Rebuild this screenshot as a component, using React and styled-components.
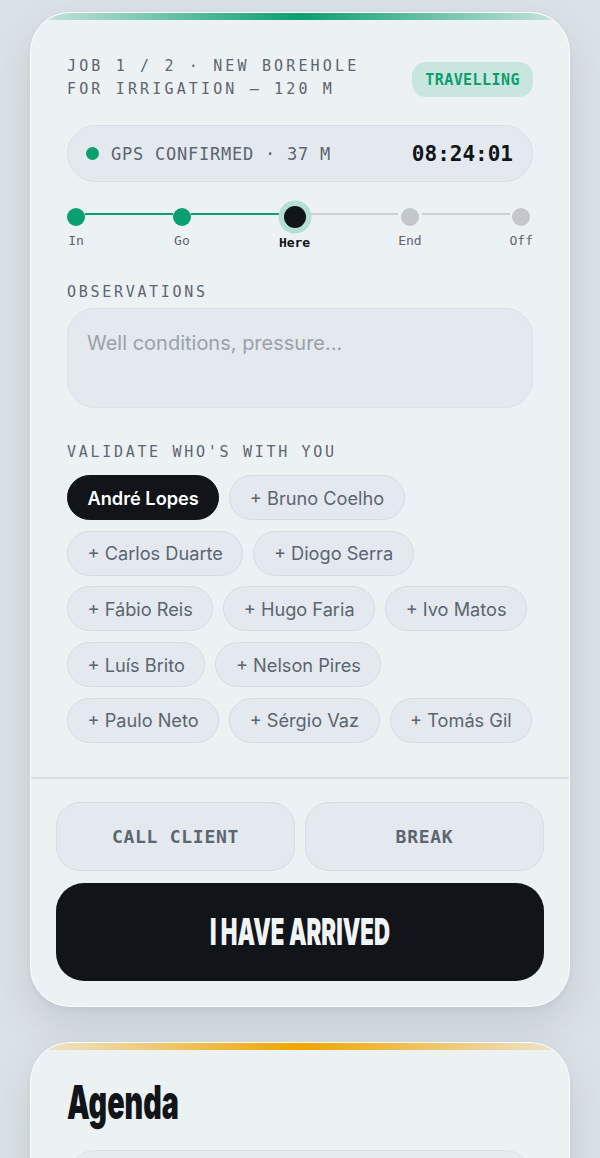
import styled, { createGlobalStyle } from 'styled-components';

// ── 전역 스타일 ──

const GlobalStyle = createGlobalStyle`
  html, body {
    margin: 0;
    padding: 0;
    background: #dbe2e7;
  }
  body {
    font-family: Inter, "Noto Sans", sans-serif;
    color: #111418;
  }
`;

const MONO = `"DejaVu Sans Mono", "Liberation Mono", monospace`;

// ── 레이아웃 ──

const Page = styled.div`
  padding: 12px 30px 40px;
  display: flex;
  flex-direction: column;
  gap: 35px;
`;

/** 카드 — 상단 컬러 스트라이프 포함 */
const Card = styled.section`
  position: relative;
  overflow: hidden;
  background: #ecf1f4;
  border: 1px solid rgba(255, 255, 255, 0.8);
  border-radius: 40px;
  box-shadow: 0 18px 40px rgba(40, 55, 70, 0.13), 0 2px 6px rgba(40, 55, 70, 0.05);

  &::before {
    content: '';
    position: absolute;
    top: 0;
    left: 0;
    right: 0;
    height: 7px;
    background: linear-gradient(
      90deg,
      ${({ $accent }) => $accent}22,
      ${({ $accent }) => $accent} 50%,
      ${({ $accent }) => $accent}22
    );
  }
`;

const CardBody = styled.div`
  padding: 42px 36px 34px;
  display: flex;
  flex-direction: column;
`;

// ── 헤더 ──

const HeaderRow = styled.div`
  display: flex;
  align-items: center;
  justify-content: space-between;
  gap: 16px;
`;

const JobTitle = styled.div`
  font-family: ${MONO};
  font-size: 15px;
  line-height: 23px;
  letter-spacing: 0.21em;
  color: #5c6570;
  text-transform: uppercase;
`;

const StatusBadge = styled.span`
  font-family: ${MONO};
  font-size: 15px;
  font-weight: 700;
  letter-spacing: 0.03em;
  color: #0a9f6e;
  background: #c8e6dd;
  border-radius: 14px;
  height: 35px;
  padding: 0 13px;
  display: inline-flex;
  align-items: center;
  margin-top: 3px;
`;

// ── GPS ──

const GpsBar = styled.div`
  margin-top: 24px;
  height: 57px;
  box-sizing: border-box;
  border-radius: 29px;
  background: #e3e9ee;
  border: 1px solid #d9dfe4;
  display: flex;
  align-items: center;
  padding: 0 19px 0 18px;
  gap: 12px;
`;

const GpsDot = styled.span`
  width: 13px;
  height: 13px;
  border-radius: 50%;
  background: #0a9f6e;
  flex: none;
`;

const GpsText = styled.span`
  flex: 1;
  font-family: ${MONO};
  font-size: 17px;
  letter-spacing: 0.045em;
  color: #5c6570;
`;

const GpsTime = styled.span`
  font-family: ${MONO};
  font-size: 21px;
  font-weight: 700;
  color: #111418;
`;

// ── 진행 단계 ──

const Stepper = styled.div`
  margin-top: 24px;
  display: flex;
  align-items: flex-start;
`;

const Step = styled.div`
  display: flex;
  flex-direction: column;
  align-items: center;
  flex: none;
`;

const DotWrap = styled.div`
  height: 22px;
  display: flex;
  align-items: center;
  justify-content: center;
`;

const StepDot = styled.span`
  width: ${({ $state }) => ($state === 'current' ? 22 : 18)}px;
  height: ${({ $state }) => ($state === 'current' ? 22 : 18)}px;
  border-radius: 50%;
  background: ${({ $state }) =>
    $state === 'done' ? '#0a9f6e' : $state === 'current' ? '#111418' : '#c3c7cb'};
  box-shadow: ${({ $state }) => ($state === 'current' ? '0 0 0 5.5px #b4e0d3' : 'none')};
`;

const StepLabel = styled.span`
  margin-top: ${({ $active }) => ($active ? 7 : 5)}px;
  font-family: ${MONO};
  font-size: 13px;
  line-height: 16px;
  font-weight: ${({ $active }) => ($active ? 700 : 400)};
  color: ${({ $active }) => ($active ? '#111418' : '#5c6570')};
`;

const Connector = styled.span`
  flex: 1;
  height: 2px;
  margin-top: 7px;
  background: ${({ $done }) => ($done ? '#0a9f6e' : '#cbd0d4')};
`;

// ── 관찰 / 동행자 ──

const FieldLabel = styled.div`
  margin-top: ${({ $gap }) => $gap}px;
  font-family: ${MONO};
  font-size: 15px;
  line-height: 18px;
  letter-spacing: 0.18em;
  color: #5c6570;
  text-transform: uppercase;
`;

const NotesBox = styled.textarea`
  margin-top: 7px;
  height: 100px;
  box-sizing: border-box;
  resize: none;
  border-radius: 28px;
  background: #e3e9ee;
  border: 1px solid #dbe1e6;
  padding: 20px 19px;
  font-family: Inter, sans-serif;
  font-size: 20px;
  line-height: 28px;
  color: #111418;
  outline: none;

  &::placeholder {
    color: #9aa1a8;
  }
`;

const ChipList = styled.div`
  margin-top: 14px;
  display: flex;
  flex-wrap: wrap;
  gap: 10.7px 10px;
`;

const Chip = styled.button`
  height: 45px;
  box-sizing: border-box;
  padding: 0 19.5px;
  border-radius: 999px;
  font-family: Inter, sans-serif;
  font-size: 18.2px;
  font-weight: ${({ $selected }) => ($selected ? 600 : 400)};
  color: ${({ $selected }) => ($selected ? '#ffffff' : '#5c6570')};
  background: ${({ $selected }) => ($selected ? '#111418' : '#e3e9ee')};
  border: 1px solid ${({ $selected }) => ($selected ? '#111418' : '#d6dce1')};
  cursor: pointer;
`;

// ── 하단 액션 ──

const Divider = styled.hr`
  margin: 0;
  border: none;
  border-top: 2px solid #d8dee3;
`;

const Actions = styled.div`
  padding: 23px 25px 25px;
  display: flex;
  flex-direction: column;
  gap: 12px;
`;

const ActionRow = styled.div`
  display: grid;
  grid-template-columns: 1fr 1fr;
  gap: 10px;
`;

const GhostButton = styled.button`
  height: 69px;
  border-radius: 24px;
  background: #e3e9ee;
  border: 1px solid #d6dce1;
  font-family: ${MONO};
  font-size: 18px;
  font-weight: 700;
  letter-spacing: 0.04em;
  color: #5c6570;
`;

const PrimaryButton = styled.button`
  height: 98px;
  border-radius: 28px;
  background: #111418;
  border: none;
  display: flex;
  align-items: center;
  justify-content: center;
`;

/** 굵은 압축 서체 효과 — Inter Black 을 가로로 축소 */
const Condensed = styled.span`
  display: inline-block;
  font-family: Inter, sans-serif;
  font-weight: 900;
  font-size: ${({ $size }) => $size}px;
  line-height: 1;
  transform: scaleX(${({ $squeeze }) => $squeeze});
  transform-origin: ${({ $origin }) => $origin || 'center'};
  color: ${({ $color }) => $color};
  white-space: nowrap;
`;

// ── 아젠다 ──

const AgendaBody = styled.div`
  padding: 35px 36px 36px;
  display: flex;
  flex-direction: column;
`;

const AgendaTitle = styled.h2`
  margin: 0;
  height: 48px;
  display: flex;
  align-items: center;
`;

const AgendaItem = styled.div`
  margin-top: 24px;
  height: 90px;
  border-radius: 28px;
  background: #e5ebef;
  border: 1px solid #dbe1e6;
`;

// ── 데이터 ──

const STEPS = [
  { label: 'In', state: 'done' },
  { label: 'Go', state: 'done' },
  { label: 'Here', state: 'current' },
  { label: 'End', state: 'todo' },
  { label: 'Off', state: 'todo' },
];

const CREW = [
  'André Lopes',
  'Bruno Coelho',
  'Carlos Duarte',
  'Diogo Serra',
  'Fábio Reis',
  'Hugo Faria',
  'Ivo Matos',
  'Luís Brito',
  'Nelson Pires',
  'Paulo Neto',
  'Sérgio Vaz',
  'Tomás Gil',
];

export default function App() {
  const selected = ['André Lopes'];

  return (
    <>
      <GlobalStyle />
      <Page>
        <Card $accent="#0a9f6e">
          <CardBody>
            <HeaderRow>
              <JobTitle>
                Job 1 / 2 · New borehole
                <br />
                for irrigation — 120 m
              </JobTitle>
              <StatusBadge>TRAVELLING</StatusBadge>
            </HeaderRow>

            <GpsBar>
              <GpsDot />
              <GpsText>GPS CONFIRMED · 37 M</GpsText>
              <GpsTime>08:24:01</GpsTime>
            </GpsBar>

            <Stepper>
              {STEPS.map((step, i) => (
                <StepFragment key={step.label} step={step} last={i === STEPS.length - 1} next={STEPS[i + 1]} />
              ))}
            </Stepper>

            <FieldLabel $gap={32}>Observations</FieldLabel>
            <NotesBox placeholder="Well conditions, pressure..." />

            <FieldLabel $gap={35}>Validate who's with you</FieldLabel>
            <ChipList>
              {CREW.map((name) => {
                const isSel = selected.includes(name);
                return (
                  <Chip key={name} $selected={isSel}>
                    {isSel ? name : `+ ${name}`}
                  </Chip>
                );
              })}
            </ChipList>
          </CardBody>

          <Divider />

          <Actions>
            <ActionRow>
              <GhostButton>CALL CLIENT</GhostButton>
              <GhostButton>BREAK</GhostButton>
            </ActionRow>
            <PrimaryButton>
              <Condensed $size={37} $squeeze={0.6} $color="#f1f4f6">
                I HAVE ARRIVED
              </Condensed>
            </PrimaryButton>
          </Actions>
        </Card>

        <Card $accent="#f0a500">
          <AgendaBody>
            <AgendaTitle>
              <Condensed $size={47} $squeeze={0.61} $origin="left" $color="#111418">
                Agenda
              </Condensed>
            </AgendaTitle>
            <AgendaItem />
          </AgendaBody>
        </Card>
      </Page>
    </>
  );
}

/** 단계 점 + 다음 단계로 이어지는 선 */
function StepFragment({ step, last, next }) {
  const active = step.state === 'current';
  return (
    <>
      <Step>
        <DotWrap>
          <StepDot $state={step.state} />
        </DotWrap>
        <StepLabel $active={active}>{step.label}</StepLabel>
      </Step>
      {!last && <Connector $done={step.state === 'done' && next && next.state !== 'todo'} />}
    </>
  );
}
